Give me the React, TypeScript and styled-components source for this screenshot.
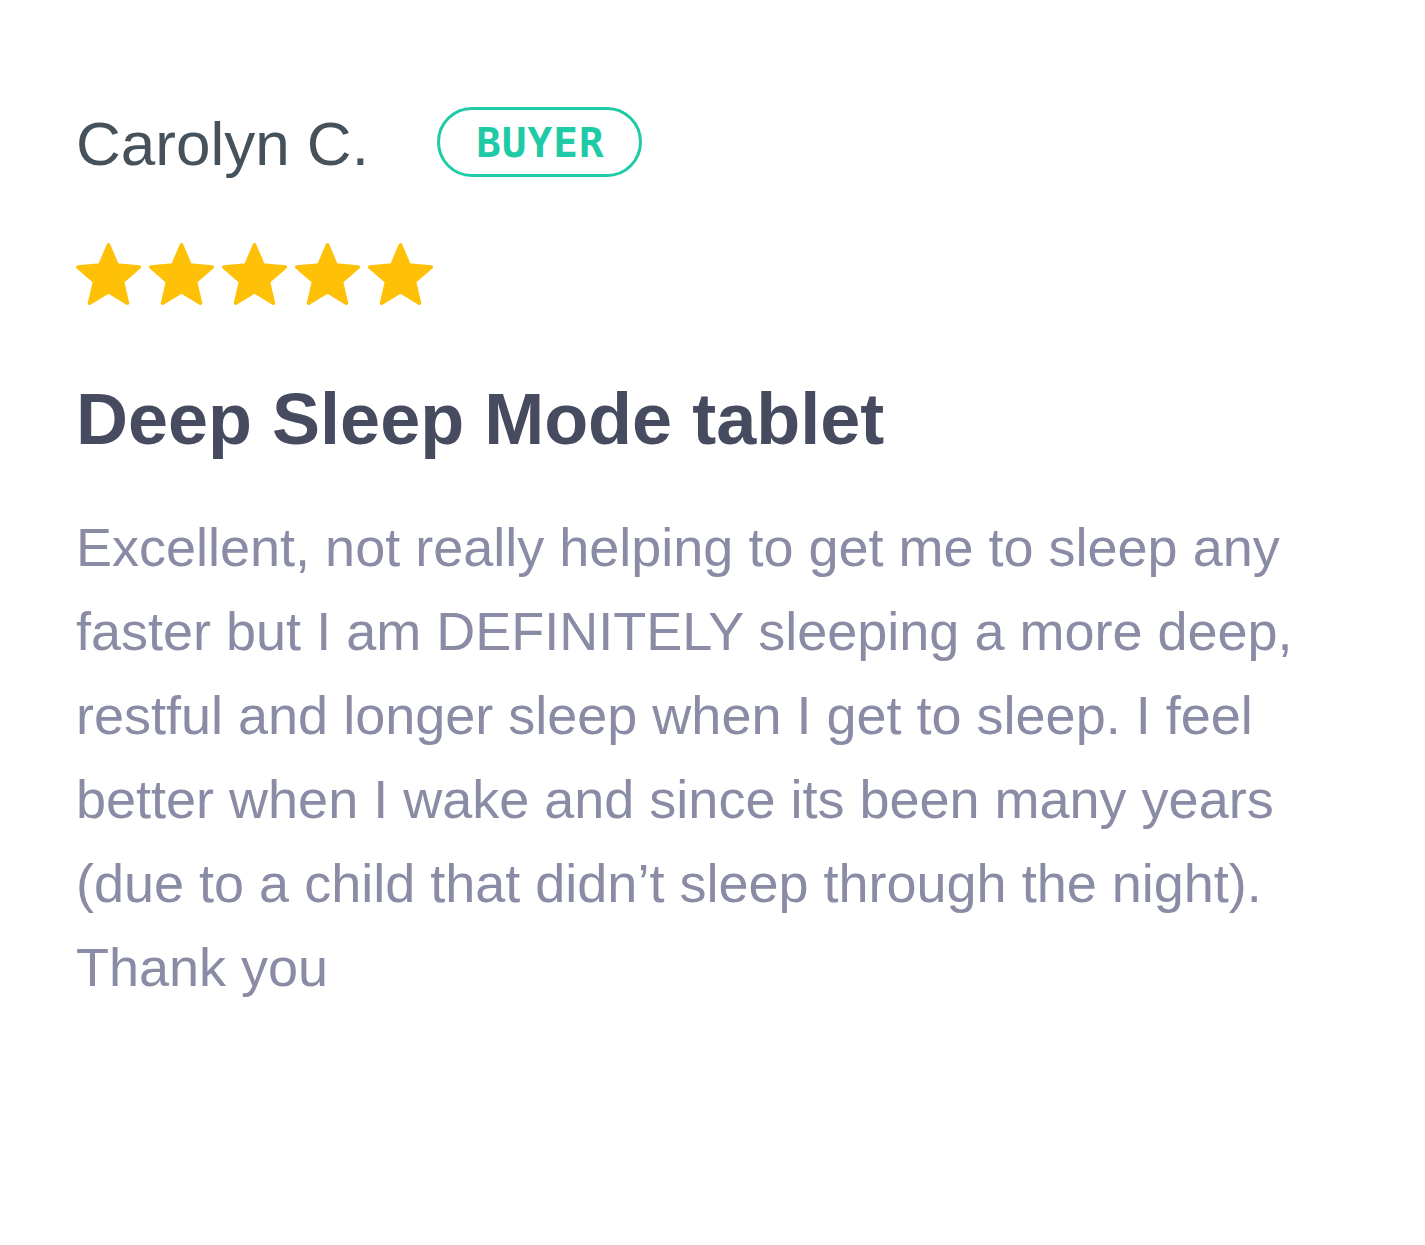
import React from "react";
import styled, { createGlobalStyle } from "styled-components";

const GlobalStyle = createGlobalStyle`
  html, body {
    margin: 0;
    padding: 0;
    background: #ffffff;
  }
  body {
    font-family: "Liberation Sans", Arial, sans-serif;
  }
`;

const Card = styled.article`
  box-sizing: border-box;
  width: 1425px;
  padding: 107px 76px 0 76px;
  display: flex;
  flex-direction: column;
  align-items: flex-start;
`;

const Header = styled.div`
  display: flex;
  align-items: center;
  gap: 68px;
  height: 70px;
`;

const Name = styled.span`
  font-size: 62px;
  line-height: 62px;
  color: #45515b;
  margin-top: 4px;
`;

const Badge = styled.span`
  box-sizing: border-box;
  width: 205px;
  height: 70px;
  border: 3.5px solid #1fcaa6;
  border-radius: 35px;
  display: flex;
  align-items: center;
  justify-content: center;
  font-family: "DejaVu Sans Mono", "Liberation Mono", monospace;
  font-weight: 700;
  font-size: 41px;
  letter-spacing: 1px;
  color: #1fcaa6;
  line-height: 1;
  padding: 3px 0 0 2px;
`;

const Stars = styled.div`
  display: flex;
  gap: 8px;
  margin-top: 66px;
`;

const StarSvg = styled.svg`
  display: block;
  width: 65px;
  height: 62px;
`;

const Title = styled.h2`
  margin: 71px 0 0 0;
  font-size: 72px;
  line-height: 86px;
  font-weight: 700;
  color: #464b5f;
`;

const Body = styled.p`
  margin: 43px 0 0 0;
  font-size: 54px;
  line-height: 84px;
  color: #8a8ba5;
`;

const Star = () => (
  <StarSvg viewBox="1.4 1.4 21.2 20.2">
    <path
      d="M12 17.27L18.18 21l-1.64-7.03L22 9.24l-7.19-.61L12 2 9.19 8.63 2 9.24l5.46 4.73L5.82 21z"
      fill="#ffc107"
      stroke="#ffc107"
      strokeWidth="1.2"
      strokeLinejoin="round"
    />
  </StarSvg>
);

export default function App() {
  return (
    <>
      <GlobalStyle />
      <Card>
        <Header>
          <Name>Carolyn C.</Name>
          <Badge>BUYER</Badge>
        </Header>
        <Stars>
          {[0, 1, 2, 3, 4].map((i) => (
            <Star key={i} />
          ))}
        </Stars>
        <Title>Deep Sleep Mode tablet</Title>
        <Body>
          Excellent, not really helping to get me to sleep any faster but I am
          DEFINITELY sleeping a more deep, restful and longer sleep when I get
          to sleep. I feel better when I wake and since its been many years
          (due to a child that didn’t sleep through the night). Thank you
        </Body>
      </Card>
    </>
  );
}
